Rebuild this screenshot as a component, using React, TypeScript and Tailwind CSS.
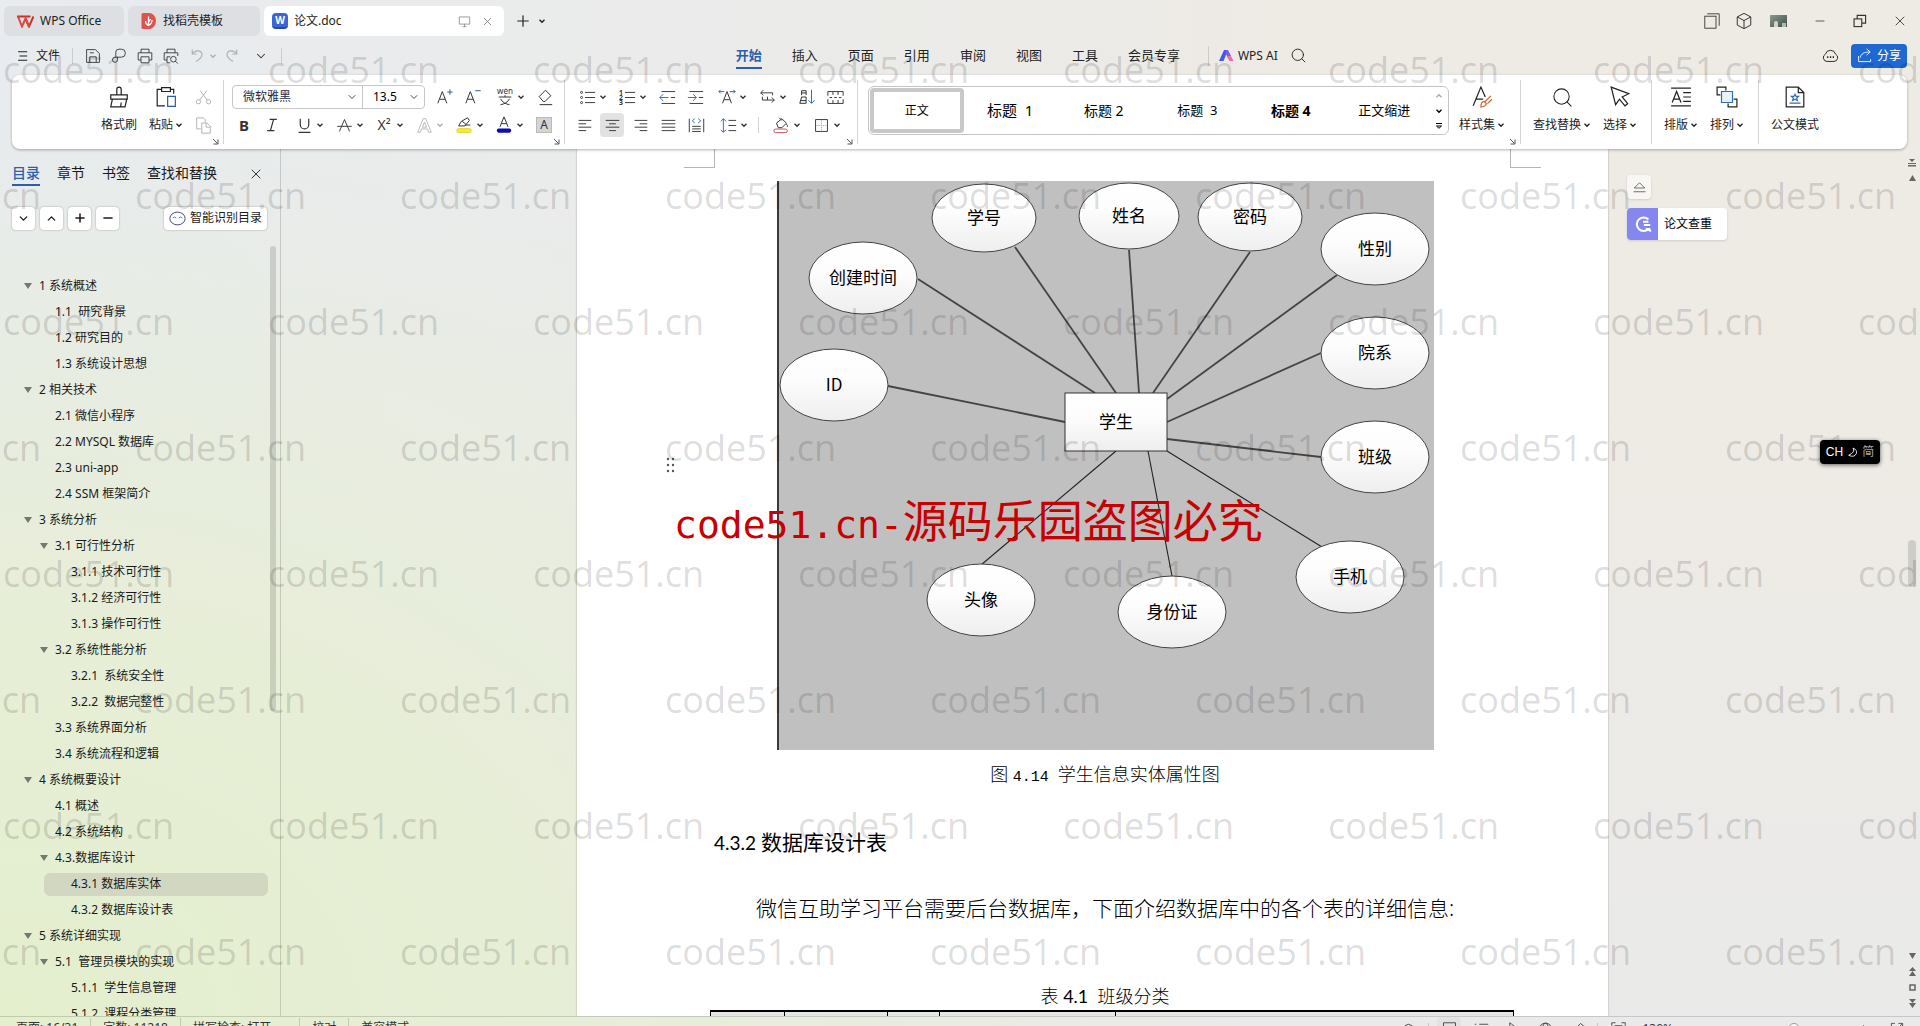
import { useState } from "react";
import type { ReactNode } from "react";
import { ChevronDown, ChevronUp, Minus, Plus, Search, X } from "lucide-react";

type IconProps = { children: ReactNode; size?: number; className?: string };

function Icon({ children, size = 20, className = "" }: IconProps) {
  return (
    <svg
      width={size}
      height={size}
      viewBox="0 0 20 20"
      fill="none"
      stroke="currentColor"
      strokeWidth={1.1}
      className={`shrink-0 ${className}`}
      aria-hidden="true"
    >
      {children}
    </svg>
  );
}

function Caret({ className = "" }: { className?: string }) {
  return (
    <svg width="8" height="8" viewBox="0 0 8 8" fill="none" stroke="currentColor" strokeWidth="1.4" className={`shrink-0 ${className}`} aria-hidden="true">
      <path d="M1.5 2.8 4 5.2 6.5 2.8" />
    </svg>
  );
}

type ToolProps = { label: string; children: ReactNode; drop?: boolean; muted?: boolean; active?: boolean };

function Tool({ label, children, drop, muted, active }: ToolProps) {
  return (
    <button
      aria-label={label}
      className={`flex h-6 shrink-0 items-center rounded ${muted ? "text-[#b0b0b0]" : "text-[#333]"} ${active ? "bg-[#e2e2e2]" : ""}`}
    >
      <span className="flex w-6 items-center justify-center">{children}</span>
      {drop && <Caret />}
    </button>
  );
}

function BigTool({ label, children, drop }: { label: string; children: ReactNode; drop?: boolean }) {
  return (
    <button className="flex shrink-0 flex-col items-center text-xs text-[#222]">
      <span className="flex h-7 items-center">{children}</span>
      <span className="flex h-6 items-center gap-0.5 pt-1 whitespace-nowrap">
        {label}
        {drop && <Caret />}
      </span>
    </button>
  );
}

function Launcher() {
  return (
    <svg width="7" height="7" viewBox="0 0 7 7" fill="none" stroke="#555" className="absolute right-1 bottom-1" aria-hidden="true">
      <path d="M1 1 5.5 5.5M6 1.5V6H1.5" />
    </svg>
  );
}

const Divider = () => <div className="h-16 w-px shrink-0 self-center bg-[#d4d4d4]" />;

const lines = (rows: [number, number][]) => rows.map(([a, b], i) => <path key={i} d={`M${a} ${4 + i * 4}H${b}`} />);

/* ---------- title bar ---------- */

function TitleBar() {
  return (
    <header className="flex h-9 shrink-0 items-end text-xs text-[#222]">
      <div className="ml-1 flex h-[30px] items-end gap-1" role="tablist">
        <button role="tab" aria-selected="false" className="flex h-[30px] w-[120px] items-center gap-1.5 rounded-md bg-[#dddfe2] pl-[13px]">
          <svg width="17" height="13" viewBox="0 0 17 13" fill="none" aria-hidden="true">
            <path d="M0 1.500h13.500M16.500 1.500 12 11.500 8.500 3.500" stroke="#c8312b" strokeWidth="2" />
            <path d="M1 1.500 5 11.500 8.500 3.500 12 11.500" stroke="#e0483e" strokeWidth="2" />
          </svg>
          WPS Office
        </button>
        <button role="tab" aria-selected="false" className="flex h-[30px] w-[132px] items-center gap-1.5 rounded-md bg-[#dddfe2] pl-[13px]">
          <svg width="16" height="16" viewBox="0 0 16 16" aria-hidden="true">
            <path d="M2 0h6a7 8 0 0 1 0 16H2a1.5 1.5 0 0 1-1.5-1.5v-13A1.5 1.5 0 0 1 2 0Z" fill="#e0524e" />
            <path d="M7.5 3.5v9M4.5 8c0 3 3 4.500 3 4.500s3.500-1.500 3.500-5.500M7.500 9.500 9.500 6" stroke="#fff" strokeWidth="1.300" fill="none" />
          </svg>
          找稻壳模板
        </button>
        <button role="tab" aria-selected="true" className="flex h-[30px] w-[240px] items-center gap-1.5 rounded-md bg-white pr-2.5 pl-2">
          <span className="flex size-4 items-center justify-center rounded-sm border-b-2 border-[#2746a8] bg-[#3c66d8] text-[10px] leading-none font-bold text-white">
            W
          </span>
          <span className="flex-1 text-left">论文.doc</span>
          <Icon size={13} className="mr-1 text-[#777]">
            <path d="M2 3h16v11H2zM7 18h6M10 14v4" />
          </Icon>
          <X size={13} strokeWidth={1.5} className="text-[#777]" />
        </button>
      </div>
      <button aria-label="新建" className="ml-2.5 flex h-[30px] items-center">
        <Plus size={18} strokeWidth={1.6} />
      </button>
      <button aria-label="标签列表" className="ml-1.5 flex h-[30px] items-center">
        <Caret />
      </button>
      <div className="ml-auto flex h-[30px] items-center text-[#333]">
        <button aria-label="工作区" className="w-8"><Icon size={16} className="mx-auto"><rect x="1" y="4" width="14" height="15" /><path d="M4 1h15v15" /></Icon></button>
        <button aria-label="应用" className="w-8"><Icon size={18} className="mx-auto"><path d="M10 1.500 17.500 5.500v9L10 18.500l-7.500-4v-9ZM2.500 5.500 10 9.500l7.500-4M10 9.500v9" /></Icon></button>
        <button aria-label="账户" className="w-9">
          <span className="mx-auto flex h-3 w-[17px] items-end bg-linear-to-br from-[#8a9c92] to-[#3f4f46]"><span className="ml-1 h-1.5 w-1 rounded-t-full bg-[#d8d0c4]" /><span className="ml-1 h-1 w-1 bg-[#a9bcae]" /></span>
        </button>
        <button aria-label="最小化" className="ml-1 w-10"><Minus size={14} strokeWidth={1.3} className="mx-auto" /></button>
        <button aria-label="还原" className="w-10"><Icon size={14} className="mx-auto"><rect x="1.500" y="7" width="11" height="11" strokeWidth="1.600" /><path d="M6 7V2h12v11h-5" strokeWidth="1.600" /></Icon></button>
        <button aria-label="关闭" className="w-10"><X size={16} strokeWidth={1.3} className="mx-auto" /></button>
      </div>
    </header>
  );
}

/* ---------- menu row ---------- */

const menus = ["开始", "插入", "页面", "引用", "审阅", "视图", "工具", "会员专享"];

function MenuBar() {
  const [menu, setMenu] = useState("开始");
  return (
    <div className="grid h-[39px] shrink-0 grid-cols-[6fr_auto_5fr] items-center text-[#222]">
      <div className="flex items-center pl-4">
        <button className="flex items-center gap-1.5 text-xs">
          <Icon size={14}><path d="M3 4h13M5 10h11M3 16h13" strokeWidth="1.500" /></Icon>
          文件
        </button>
        <div className="mr-2 ml-3 h-4 w-px bg-[#ccc]" />
        <div className="flex gap-0.5">
          <Tool label="保存"><Icon size={16}><path d="M2 2h11l5 5v11H2ZM6 18v-7h8v7M6 6h5" /></Icon></Tool>
          <Tool label="输出为PDF"><Icon size={16}><path d="M6 12V5q0-3.500 4-3.500h3a5 5 0 0 1 0 10H5a3.200 3.200 0 1 0 3.200 3.200V11" /></Icon></Tool>
          <Tool label="打印"><Icon size={16}><path d="M5 6V1.500h10V6M5 15H1.500V6h17v9H15M5 11h10v7.500H5z" /></Icon></Tool>
          <Tool label="打印预览"><Icon size={16}><path d="M5 6V1.500h10V6M5 15H1.500V6h17v4M5 11h4M5 11v7.500h4" /><circle cx="13" cy="14" r="3.500" /><path d="m15.500 16.500 3 3" /></Icon></Tool>
          <Tool label="撤销" drop muted><Icon size={15}><path d="M3 2v6h6M3 8c3-5 12-6 13 0 .5 4-3 7-8 10" strokeWidth="1.500" /></Icon></Tool>
          <Tool label="恢复" muted><Icon size={15}><path d="M17 2v6h-6M17 8C14 3 5 2 4 8c-.5 4 3 7 8 10" strokeWidth="1.500" /></Icon></Tool>
          <span className="ml-1"><Tool label="更多"><ChevronDown size={14} strokeWidth={1.8} /></Tool></span>
        </div>
        <div className="ml-2 h-4 w-px bg-[#ccc]" />
      </div>
      <div className="flex items-center">
        <nav className="flex gap-[30px] pt-1 text-[13px]">
          {menus.map((m) => (
            <button
              key={m}
              onClick={() => setMenu(m)}
              className={`border-b-2 pb-px whitespace-nowrap ${m === menu ? "border-[#2b5fab] font-bold text-[#2b5fab]" : "border-transparent"}`}
            >
              {m}
            </button>
          ))}
        </nav>
        <div className="ml-7 h-5 w-px bg-[#ccc]" />
        <button className="ml-2.5 flex items-center gap-1 text-xs">
          <svg width="15" height="13" viewBox="0 0 15 13" aria-hidden="true">
            <path d="M0 12 5 1h4L4.500 12Z" fill="#3f5be8" />
            <path d="M7.500 1H9l3 6-3.500 1L6.500 4Z" fill="#7c5be6" />
            <path d="m8 8 4-1 2.500 5h-4Z" fill="#f06aa8" />
          </svg>
          WPS AI
        </button>
        <button aria-label="搜索" className="ml-3"><Search size={17} strokeWidth={1.3} /></button>
      </div>
      <div className="flex items-center justify-end gap-3 pr-[13px]">
        <button aria-label="云同步">
          <Icon size={17}><path d="M6 17a4.500 4.500 0 0 1-2-8.500 6.200 6.200 0 0 1 12 0A4.500 4.500 0 0 1 14 17Z" /><path d="M6 12h1.500M9.300 12h1.500M12.600 12h1.500" strokeWidth="2" /></Icon>
        </button>
        <button className="flex h-6 w-14 items-center justify-center gap-1 rounded bg-[#1e68d2] text-xs text-white">
          <Icon size={16}><path d="M2 10v7h15v-3M4 12c1-5 5-7 12-7M12 1l4.500 4-4.500 4" /></Icon>
          分享
        </button>
      </div>
    </div>
  );
}

/* ---------- ribbon ---------- */

const styles = [
  { name: "正文", cls: "text-xs" },
  { name: "标题  1", cls: "text-[15px]" },
  { name: "标题 2", cls: "text-[14px]" },
  { name: "标题  3", cls: "text-[13px]" },
  { name: "标题 4", cls: "text-[14px] font-bold" },
  { name: "正文缩进", cls: "text-[13px]" },
];

function FontGroup() {
  return (
    <div className="relative flex w-[340px] shrink-0 flex-col gap-1 pt-2.5 pl-2">
      <div className="flex gap-2">
        <div className="flex h-6 w-[193px] items-center rounded border border-[#c6c6c6] text-xs">
          <label className="flex h-full flex-1 items-center">
            <input aria-label="字体" defaultValue="微软雅黑" className="w-full min-w-0 pl-2.5 text-xs text-[#1c2c4a] outline-none" />
            <ChevronDown size={12} strokeWidth={1.4} className="mr-1 shrink-0" />
          </label>
          <label className="flex h-full w-[62px] items-center border-l border-[#c6c6c6]">
            <input aria-label="字号" defaultValue="13.5" className="w-full min-w-0 pl-2.5 text-xs outline-none" />
            <ChevronDown size={12} strokeWidth={1.4} className="mr-1 shrink-0" />
          </label>
        </div>
        <div className="flex gap-1">
          <Tool label="增大字号"><Icon size={18}><path d="M2 17 7 4l5 13M4 12.500h6" /><path d="M12.500 4.500h6M15.500 1.500v6" stroke="#2f5e9e" /></Icon></Tool>
          <Tool label="减小字号"><Icon size={18}><path d="M2 17 7 4l5 13M4 12.500h6" /><path d="M12.500 3h6" stroke="#2f5e9e" /></Icon></Tool>
        </div>
        <Tool label="拼音指南" drop>
          <Icon size={18}><text x="10" y="7" textAnchor="middle" fontSize="9" fill="currentColor" stroke="none">wén</text><path d="M3 10h14M10 8v2M5 12c2 4 6 6 10 6.500M15 12c-2 4-6 6-10 6.500" /></Icon>
        </Tool>
        <Tool label="清除格式"><Icon size={18}><path d="m3.500 9.500 7-7 6 6-6.500 6.500H8ZM4 18.500h14" /></Icon></Tool>
      </div>
      <div className="flex gap-2">
        <div className="flex gap-1">
          <Tool label="加粗"><b className="text-[15px]">B</b></Tool>
          <Tool label="倾斜"><Icon size={16}><path d="M7 3h9M4 17h9M12 3 8 17" strokeWidth="1.500" /></Icon></Tool>
        </div>
        <Tool label="下划线" drop><Icon size={17}><path d="M5 2v7a5 5 0 0 0 10 0V2M3 18h14" strokeWidth="1.400" /></Icon></Tool>
        <Tool label="删除线" drop><Icon size={17}><path d="M10 3 4 17M10 3l6 14M1.500 11h17" /></Icon></Tool>
        <Tool label="上标" drop><span className="text-sm">X²</span></Tool>
        <Tool label="文字效果" drop muted><Icon size={17}><path d="M8.500 2h3L18 18h-3l-1.500-4h-7L5 18H2ZM10 6l-2.500 6h5Z" strokeWidth="1" /></Icon></Tool>
        <Tool label="突出显示" drop><Icon size={18}><path d="m4 11 3-5 7-4 2 3-5 6H4ZM8 6l4 3M11 10h6" /><rect x="2" y="14" width="16" height="4.500" rx="2" fill="#f7ef1c" stroke="#c7bd22" strokeWidth=".6" /></Icon></Tool>
        <Tool label="字体颜色" drop><Icon size={18}><path d="M5.500 12 10 1l4.500 11M7 8.500h6" /><rect x="2" y="14" width="16" height="4.500" rx="2" fill="#0b0bb8" stroke="none" /></Icon></Tool>
        <Tool label="字符底纹"><span className="flex size-4 items-center justify-center border border-[#bbb] bg-[#d4d4d4] text-xs">A</span></Tool>
      </div>
      <Launcher />
    </div>
  );
}

function ParagraphGroup() {
  return (
    <div className="relative flex w-[292px] shrink-0 flex-col gap-1 pt-2.5 pl-[7px]">
      <div className="flex gap-2 pl-[3px]">
        <Tool label="项目符号" drop><Icon size={17}>{[4, 10, 16].map((y) => <g key={y}><circle cx="3" cy={y} r="1.200" /><path d={`M7 ${y}h12`} /></g>)}</Icon></Tool>
        <Tool label="编号" drop><Icon size={17}>{[4, 10, 16].map((y, i) => <g key={y}><text x="0" y={y + 3} fontSize="8" fontWeight="700" fill="currentColor" stroke="none">{i + 1}</text><path d={`M7 ${y}h12`} /></g>)}</Icon></Tool>
        <div className="flex gap-1">
          <Tool label="减少缩进"><Icon size={17}><path d="M3 3h16M3 17h16M14 10h5" /><path d="M1 10h10M5 6l-4 4 4 4" stroke="#2f6db5" /></Icon></Tool>
          <Tool label="增加缩进"><Icon size={17}><path d="M3 3h16M3 17h16M14 10h5" /><path d="M1 10h10M7 6l4 4-4 4" stroke="#2f6db5" /></Icon></Tool>
        </div>
        <Tool label="中文版式" drop><Icon size={18}><path d="M5 17 10 4l5 13M7 13h6" /><path d="M1 4h6M3 2 1 4l2 2M19 4h-6M17 2l2 2-2 2" stroke="#2f6db5" /></Icon></Tool>
        <Tool label="文字方向" drop><Icon size={17}><path d="M5 1.500 2 4.500l3 3M2 4.500h14v3M4 9v4h14M15 10l3 3-3 3M10 9v4" /></Icon></Tool>
        <div className="flex gap-1">
          <Tool label="排序"><Icon size={18}><path d="M4 8V3h5v5M4 5.500h5M2 17l2-7h5v7H2M3 14h6" /><path d="M15 2v15M11.500 13.500 15 17l3.500-3.500" stroke="#2f6db5" /></Icon></Tool>
          <Tool label="制表位"><Icon size={17}><path d="M1 8V3h18v5M1 12v5h18v-5M7 3v4M13 3v4M7 17v-4M13 17v-4M3 10h3M8.500 10h3M14 10h3" /></Icon></Tool>
        </div>
      </div>
      <div className="flex gap-1">
        <Tool label="左对齐"><Icon size={17}>{lines([[3, 18], [3, 12], [3, 18], [3, 12]])}</Icon></Tool>
        <Tool label="居中" active><Icon size={17}>{lines([[2, 18], [6, 14], [2, 18], [6, 14]])}</Icon></Tool>
        <Tool label="右对齐"><Icon size={17}>{lines([[3, 18], [9, 18], [3, 18], [9, 18]])}</Icon></Tool>
        <Tool label="两端对齐"><Icon size={17}>{lines([[2, 18], [2, 18], [2, 18], [2, 18]])}</Icon></Tool>
        <Tool label="分散对齐"><Icon size={17}><path d="M1.500 2v16M18.500 2v16M5 11h10M5 14h10M5 17h10" /><path d="M8 2 5 4.500 8 7M12 2l3 2.500L12 7" stroke="#2f6db5" /></Icon></Tool>
        <span className="ml-1"><Tool label="行距" drop><Icon size={17}><path d="M10 4h9M10 10h9M10 16h9" /><path d="M4 2v16M1 5l3-3 3 3M1 15l3 3 3-3" stroke="#2f6db5" /></Icon></Tool></span>
        <div className="mx-1.5 h-4 w-px self-center bg-[#d4d4d4]" />
        <Tool label="底纹颜色" drop><Icon size={18}><path d="m5 8 6-5 5 5-5 5H7ZM8 2l3 3M16 9q2 2 1 3" /><rect x="2" y="14.500" width="15" height="4" rx="2" stroke="#c4525c" /></Icon></Tool>
        <span className="ml-1"><Tool label="边框" drop><Icon size={17}><path d="M3 3h14v14H3z" /><path d="M10 4v12M4 10h12" stroke="#aaa" strokeDasharray="1.500 1" /></Icon></Tool></span>
      </div>
      <Launcher />
    </div>
  );
}

function Ribbon() {
  return (
    <section className="relative z-10 mr-[13px] ml-3 flex h-[74px] shrink-0 overflow-hidden rounded-lg bg-white shadow-[0_1px_3px_rgba(0,0,0,0.3)]">
      <div className="relative flex w-[211px] shrink-0 gap-3 pt-2 pl-[89px]">
        <BigTool label="格式刷"><Icon size={22}><path d="M8 8V3a2 2 0 0 1 4 0v5M2.500 8h15v4h-15ZM4 12l-1.500 7h13l1.500-7M12 15l-.5 4" /></Icon></BigTool>
        <BigTool label="粘贴" drop><Icon size={22}><path d="M6 3H2v15h7M14 3h3v4M6 1.500h8V5H6Z" /><path d="M11.500 9.500h7v9h-7z" stroke="#2f5e9e" /></Icon></BigTool>
        <div className="-ml-1 flex flex-col gap-1 pt-0.5">
          <Tool label="剪切" muted><Icon size={17}><circle cx="4" cy="15" r="2.500" /><circle cx="16" cy="15" r="2.500" /><path d="M5.500 13 14 2M14.500 13 6 2" /></Icon></Tool>
          <Tool label="复制" muted><Icon size={17}><path d="M7 14H2V1h8l2 2v3M8 7h6l4 4v8H8ZM13 7v5h5" /></Icon></Tool>
        </div>
        <Launcher />
      </div>
      <Divider />
      <FontGroup />
      <Divider />
      <ParagraphGroup />
      <Divider />
      <div className="mt-[11px] ml-2.5 flex h-[49px] w-[581px] shrink-0 rounded-md border border-[#c4c4c4] p-px">
        {styles.map((s, i) => (
          <button
            key={s.name}
            className={`flex-1 rounded border-4 whitespace-pre text-black ${s.cls} ${i === 0 ? "border-[#c8c8c8]" : "border-transparent"}`}
          >
            {s.name}
          </button>
        ))}
        <div className="flex w-4 flex-col items-center justify-around">
          <button aria-label="上一行" className="text-[#aaa]"><Caret className="rotate-180" /></button>
          <button aria-label="下一行"><Caret /></button>
          <button aria-label="展开样式">
            <svg width="8" height="8" viewBox="0 0 8 8" fill="none" stroke="currentColor" aria-hidden="true"><path d="M1 1.500h6M1.500 4 4 6.300 6.500 4Z" /></svg>
          </button>
        </div>
      </div>
      <div className="relative w-[71px] shrink-0 pt-2 pl-2.5">
        <BigTool label="样式集" drop><Icon size={22}><path d="M2 18 9 1l4 9M4.500 12H11" /><path d="m18 9-6 6M19 12l-4 4M12 14q-3 0-3 5 4 0 5-3Z" stroke="#d1632b" /></Icon></BigTool>
        <Launcher />
      </div>
      <Divider />
      <div className="flex w-[130px] shrink-0 gap-3 pt-2 pl-3">
        <BigTool label="查找替换" drop><Search size={23} strokeWidth={1.1} /></BigTool>
        <BigTool label="选择" drop><Icon size={22}><path d="m2 1 16 6-6 3 5 6-2.500 2-5-6L6 17Z" /></Icon></BigTool>
      </div>
      <Divider />
      <div className="flex w-[106px] shrink-0 gap-3 pt-2 pl-3">
        <BigTool label="排版" drop><Icon size={22}><path d="M1 2h18M1 18h18M12 6h7M12 10h7M12 14h7M2 15 6 5l4 10M3.500 12h5" /></Icon></BigTool>
        <BigTool label="排列" drop><Icon size={22}><path d="M4 8H1V1h8v3M16 12h3v7h-8v-3" /><path d="M5 5h10v10H5z" stroke="#2f6db5" fill="#eaf3fd" /></Icon></BigTool>
      </div>
      <Divider />
      <div className="pt-2 pl-3">
        <BigTool label="公文模式"><Icon size={22}><path d="M2 1h11l5 5v13H2ZM13 1v5h5" /><path d="m10 7.500 1 2h2.200l-1.700 1.500.7 2.200-2.200-1.200-2.200 1.200.7-2.200L6.800 9.500H9ZM5 15.500h10" stroke="#2f6db5" /></Icon></BigTool>
      </div>
    </section>
  );
}

/* ---------- outline ---------- */

type Row = { level: 1 | 2 | 3; text: string; open?: boolean };

const outline: Row[] = [
  { level: 1, text: "1 系统概述", open: true },
  { level: 2, text: "1.1  研究背景" },
  { level: 2, text: "1.2 研究目的" },
  { level: 2, text: "1.3 系统设计思想" },
  { level: 1, text: "2 相关技术", open: true },
  { level: 2, text: "2.1 微信小程序" },
  { level: 2, text: "2.2 MYSQL 数据库" },
  { level: 2, text: "2.3 uni-app" },
  { level: 2, text: "2.4 SSM 框架简介" },
  { level: 1, text: "3 系统分析", open: true },
  { level: 2, text: "3.1 可行性分析", open: true },
  { level: 3, text: "3.1.1 技术可行性" },
  { level: 3, text: "3.1.2 经济可行性" },
  { level: 3, text: "3.1.3 操作可行性" },
  { level: 2, text: "3.2 系统性能分析", open: true },
  { level: 3, text: "3.2.1  系统安全性" },
  { level: 3, text: "3.2.2  数据完整性" },
  { level: 2, text: "3.3 系统界面分析" },
  { level: 2, text: "3.4 系统流程和逻辑" },
  { level: 1, text: "4 系统概要设计", open: true },
  { level: 2, text: "4.1 概述" },
  { level: 2, text: "4.2 系统结构" },
  { level: 2, text: "4.3.数据库设计", open: true },
  { level: 3, text: "4.3.1 数据库实体" },
  { level: 3, text: "4.3.2 数据库设计表" },
  { level: 1, text: "5 系统详细实现", open: true },
  { level: 2, text: "5.1  管理员模块的实现", open: true },
  { level: 3, text: "5.1.1  学生信息管理" },
  { level: 3, text: "5.1.2  课程分类管理" },
];

const indent = { 1: "ml-6", 2: "ml-10", 3: "ml-11 pl-3" };

function Outline() {
  const [selected, setSelected] = useState("4.3.1 数据库实体");
  return (
    <aside className="flex w-[281px] shrink-0 flex-col border-r border-black/15 text-[#1a1a1a]">
      <div className="flex h-[37px] shrink-0 items-end gap-[17px] pl-3 text-sm">
        <button className="border-b-2 border-[#2b5fab] pb-px font-medium text-[#2b5fab]">目录</button>
        <button className="pb-[3px]">章节</button>
        <button className="pb-[3px]">书签</button>
        <button className="pb-[3px]">查找和替换</button>
        <button aria-label="关闭" className="mr-4 ml-auto pb-1"><X size={16} strokeWidth={1.3} /></button>
      </div>
      <div className="mt-5 flex h-6 shrink-0 items-center gap-[5px] pr-[13px] pl-3">
        {[
          { label: "展开", icon: <ChevronDown size={13} strokeWidth={2.4} /> },
          { label: "收起", icon: <ChevronUp size={13} strokeWidth={2.4} /> },
          { label: "增加", icon: <Plus size={14} strokeWidth={2.6} /> },
          { label: "减少", icon: <Minus size={14} strokeWidth={2.4} /> },
        ].map((b) => (
          <button key={b.label} aria-label={b.label} className="flex size-[23px] items-center justify-center rounded bg-white shadow-[0_0_2px_rgba(0,0,0,0.35)]">
            {b.icon}
          </button>
        ))}
        <button className="ml-auto flex h-[23px] w-[103px] items-center justify-center gap-1 rounded bg-white text-xs shadow-[0_0_2px_rgba(0,0,0,0.35)]">
          <Icon size={17} className="text-[#3c4464]"><ellipse cx="10" cy="10" rx="9" ry="7.500" /><path d="M4.500 9.500q2-2.500 4 0M11.500 9.500q2-2.500 4 0" stroke="#3c6fd8" /></Icon>
          智能识别目录
        </button>
      </div>
      <div className="mt-4 flex min-h-0 flex-1 justify-between overflow-hidden">
        <ul className="w-[268px] shrink-0 pt-[27px] text-xs">
          {outline.map((r) => (
            <li key={r.text} className="flex h-[26px] items-center">
              <button
                onClick={() => setSelected(r.text)}
                className={`flex h-[23px] flex-1 items-center gap-[7px] rounded-md whitespace-pre ${indent[r.level]} ${r.text === selected ? "bg-[#d1d7c1]" : ""}`}
              >
                <svg width="8" height="8" viewBox="0 0 8 8" fill="#76786f" aria-hidden="true">{r.open && <path d="M0 1h8L4 7Z" />}</svg>
                {r.text}
              </button>
            </li>
          ))}
        </ul>
        <div className="mr-1 h-[465px] w-1.5 rounded-full bg-black/13" />
      </div>
    </aside>
  );
}

/* ---------- document ---------- */

const attributes = [
  { name: "创建时间", x: 86, y: 97, rx: 54, ry: 36, from: [141, 98], to: [318, 212] },
  { name: "学号", x: 207, y: 37, rx: 52, ry: 34, from: [238, 66], to: [339, 212] },
  { name: "姓名", x: 352, y: 35, rx: 50, ry: 33, from: [352, 69], to: [362, 212] },
  { name: "密码", x: 473, y: 36, rx: 52, ry: 34, from: [473, 71], to: [376, 212] },
  { name: "性别", x: 598, y: 68, rx: 54, ry: 36, from: [560, 94], to: [390, 218] },
  { name: "院系", x: 598, y: 172, rx: 54, ry: 36, from: [544, 172], to: [390, 241] },
  { name: "班级", x: 598, y: 276, rx: 54, ry: 36, from: [544, 276], to: [390, 258] },
  { name: "ID", x: 57, y: 204, rx: 54, ry: 36, from: [111, 205], to: [288, 241] },
  { name: "手机", x: 573, y: 396, rx: 54, ry: 36, from: [545, 366], to: [390, 270], thin: true },
  { name: "身份证", x: 395, y: 431, rx: 54, ry: 36, from: [395, 395], to: [371, 270], thin: true },
  { name: "头像", x: 204, y: 419, rx: 54, ry: 36, from: [204, 384], to: [339, 270], thin: true },
];

function EntityDiagram() {
  return (
    <svg
      viewBox="0 0 657 569"
      className="mx-auto block w-[657px] max-w-full bg-[#c0c0c0]"
      role="img"
      aria-label="学生信息实体属性图"
      fontSize="17"
      textAnchor="middle"
      fontFamily="'Noto Sans CJK SC', sans-serif"
    >
      <defs>
        <linearGradient id="shape" x2="0" y2="1">
          <stop offset="0" stopColor="#fff" />
          <stop offset=".4" stopColor="#fdfdfd" />
          <stop offset="1" stopColor="#eee" />
        </linearGradient>
      </defs>
      <path d="M1 0v569" stroke="#3a3a3a" strokeWidth="2" />
      {attributes.map((a) => (
        <path
          key={a.name}
          d={`M${a.from[0]} ${a.from[1]}L${a.to[0]} ${a.to[1]}`}
          stroke={a.thin ? "#222" : "#444"}
          strokeWidth={a.thin ? 1.1 : 1.8}
        />
      ))}
      {attributes.map((a) => (
        <g key={a.name}>
          <ellipse cx={a.x} cy={a.y} rx={a.rx} ry={a.ry} fill="url(#shape)" stroke="#444" />
          <text x={a.x} y={a.y + 6}>{a.name}</text>
        </g>
      ))}
      <rect x="288" y="212" width="102" height="58" fill="url(#shape)" stroke="#333" />
      <text x="339" y="247">学生</text>
    </svg>
  );
}

function Page() {
  return (
    <article className="relative w-[1031px] shrink-0 bg-white pt-8 pr-[112px] pl-[137px] text-black shadow-[0_0_2px_rgba(0,0,0,0.3)]">
      <div className="absolute top-0 left-[107px] h-[19px] w-[31px] border-r border-b border-[#b5b5b5]" />
      <div className="absolute top-0 right-[67px] h-[19px] w-[31px] border-b border-l border-[#b5b5b5]" />
      <svg width="10" height="16" viewBox="0 0 10 16" fill="#555" className="absolute top-[308px] left-[89px]" aria-hidden="true">
        {[2, 8, 14].map((y) => <g key={y}><circle cx="2" cy={y} r="1.200" /><circle cx="7" cy={y} r="1.200" /></g>)}
      </svg>
      <EntityDiagram />
      <p className="mt-2.5 text-center text-[18px] leading-7 font-light whitespace-pre">
        图 <span className="font-['Liberation_Mono'] text-[15px]">4.14 </span>学生信息实体属性图
      </p>
      <h3 className="mt-[34px] text-[21px] leading-8 whitespace-pre">
        <span className="font-[Lato] text-[19px]">4.3.2 </span>数据库设计表
      </h3>
      <p className="mt-[31px] -mr-16 pl-[42px] text-[21px] leading-9 font-light">
        微信互助学习平台需要后台数据库，下面介绍数据库中的各个表的详细信息:
      </p>
      <p className="mt-14 text-center text-[18px] leading-7 font-light whitespace-pre">
        表 <span className="font-[Lato] font-normal">4.1  </span>班级分类
      </p>
      <table className="-ml-1 w-[804px] table-fixed border-collapse">
        <thead>
          <tr className="h-8 bg-[#e5e5e5]">
            <th className="w-[74px] border border-t-2 border-black" />
            <th className="w-[103px] border border-t-2 border-black" />
            <th className="w-[52px] border border-t-2 border-black" />
            <th className="w-[176px] border border-t-2 border-black" />
            <th className="border border-t-2 border-black" />
          </tr>
        </thead>
      </table>
    </article>
  );
}

function PageScrollbar() {
  return (
    <div className="flex w-4 shrink-0 flex-col items-center pt-2.5 pb-2 text-[#666]">
      <svg width="8" height="8" viewBox="0 0 8 8" fill="currentColor" aria-hidden="true"><path d="M1 0h6L4 3ZM0 4h8v1H0ZM0 6h8v1.500H0Z" /></svg>
      <svg width="7" height="6" viewBox="0 0 7 6" fill="currentColor" className="mt-2" aria-hidden="true"><path d="M3.500 0 7 6H0Z" /></svg>
      <div className="mt-[359px] h-[47px] w-2 rounded-full bg-[#cfcdc8]" />
      <div className="mt-auto flex flex-col items-center gap-2">
        <svg width="7" height="6" viewBox="0 0 7 6" fill="currentColor" aria-hidden="true"><path d="M0 0h7L3.500 6Z" /></svg>
        <svg width="7" height="9" viewBox="0 0 7 9" fill="currentColor" aria-hidden="true"><path d="M3.500 0 7 4H0ZM3.500 4 7 9H0Z" /></svg>
        <svg width="7" height="7" viewBox="0 0 7 7" fill="none" stroke="currentColor" strokeWidth="1.500" aria-hidden="true"><path d="M1 1h5v5H1z" /></svg>
        <svg width="7" height="9" viewBox="0 0 7 9" fill="currentColor" aria-hidden="true"><path d="M0 0h7L3.500 4ZM0 4h7L3.500 9Z" /></svg>
      </div>
    </div>
  );
}

function DocumentArea() {
  return (
    <main className="relative flex min-w-0 flex-1 overflow-hidden">
      <div className="flex flex-1 justify-center overflow-hidden">
        <Page />
      </div>
      <PageScrollbar />
      <div className="absolute top-[26px] right-[193px] flex w-[100px] flex-col items-start gap-[9px]">
        <button aria-label="收起" className="flex size-6 items-center justify-center rounded-sm bg-white/60 pb-0.5 shadow-sm">
          <Icon size={15} className="text-[#555]"><path d="M3 12 10 5l7 7ZM2 17h16" /></Icon>
        </button>
        <button className="flex h-8 w-full items-center overflow-hidden rounded-sm bg-white text-xs shadow">
          <span className="flex h-full w-[31px] items-center justify-center bg-[#8687ee] text-white">
            <Icon size={18}><path d="M16 5a7.500 7.500 0 1 0 0 10.500M10 7.500h6M11 11h7M13 15.500h4l1.500 3" strokeWidth="2.200" /></Icon>
          </span>
          <span className="ml-1.5">论文查重</span>
        </button>
      </div>
      <div className="absolute top-[291px] right-10 flex h-6 w-[60px] items-center justify-center gap-1 rounded bg-black font-['Liberation_Sans','Noto_Sans_CJK_SC',sans-serif] text-xs text-white shadow-[0_1px_4px_rgba(0,0,0,0.6)]">
        CH
        <Icon size={11}><path d="M11 2q5 7-8 13 10 5 14-3 2-7-6-10Z" strokeWidth="1.600" /></Icon>
        <span className="text-[#aaa]">简</span>
      </div>
    </main>
  );
}

/* ---------- status bar ---------- */

function StatusBar() {
  const sep = <div className="mx-3 h-3 w-px bg-black/15" />;
  return (
    <footer className="-mb-3.5 flex h-6 shrink-0 items-start border-t border-black/15 px-4 pt-px text-xs leading-5 text-[#333]">
      <span>页面: 16/31</span>
      {sep}
      <span>字数: 11218</span>
      {sep}
      <span>拼写检查: 打开</span>
      <div className="mr-3 ml-7 h-3 w-px bg-black/15" />
      <span>校对</span>
      {sep}
      <span>兼容模式</span>
      <div className="-mt-px ml-auto flex items-center">
        <Tool label="护眼模式"><Icon size={15}><path d="M1 10q9-14 18 0-9 12-18 0Z" /><circle cx="10" cy="9" r="3" /></Icon></Tool>
        <div className="mx-2 h-3 w-px bg-black/15" />
        <div className="flex gap-2">
          <Tool label="页面视图" active><Icon size={15}><path d="M2 1h16v18H2zM6 6h8M6 10h8" /></Icon></Tool>
          <Tool label="大纲"><Icon size={15}><path d="M1 3h2M7 3h12M4 10h2M9 10h10M1 17h2M7 17h12" /></Icon></Tool>
          <Tool label="阅读版式"><Icon size={15}><path d="m5 1 12 9-12 9Z" /></Icon></Tool>
          <Tool label="Web版式"><Icon size={15}><circle cx="10" cy="10" r="8.500" /><ellipse cx="10" cy="10" rx="4" ry="8.500" /><path d="M1.500 10h17" /></Icon></Tool>
          <Tool label="写作模式"><Icon size={15}><path d="m4 12 10-10 4 3L8 16l-6 2Z" /></Icon></Tool>
        </div>
        <div className="mx-2 h-3 w-px bg-black/15" />
        <Tool label="最佳显示比例"><Icon size={15}><path d="M1 5V1h5M14 1h5v4M5 5h10v10H5zM1 15v4h5M14 19h5v-4" /></Icon></Tool>
        <span className="ml-3">130%</span>
        <button aria-label="缩小" className="ml-4"><Minus size={12} /></button>
        <label className="mx-2 flex items-center">
          <input type="range" aria-label="显示比例" defaultValue={62} className="h-3 w-[140px] appearance-none rounded-full bg-transparent [&::-webkit-slider-thumb]:size-3 [&::-webkit-slider-thumb]:appearance-none [&::-webkit-slider-thumb]:rounded-full [&::-webkit-slider-thumb]:border [&::-webkit-slider-thumb]:border-[#999] [&::-webkit-slider-thumb]:bg-white" />
        </label>
        <button aria-label="放大"><Plus size={13} /></button>
        <button aria-label="全屏" className="ml-5"><Icon size={14}><path d="M2 7V2h5M12 2h6v6M18 2l-6 6M2 13v5h5" /></Icon></button>
      </div>
    </footer>
  );
}

/* ---------- watermark ---------- */

function Watermark() {
  return (
    <div className="pointer-events-none absolute inset-0 z-20 overflow-hidden pt-[7px]" aria-hidden="true">
      {Array.from({ length: 8 }, (_, row) => (
        <div key={row} className={`flex h-[126px] items-center ${row % 2 ? "-ml-[130px]" : "ml-[3px]"}`}>
          {Array.from({ length: 9 }, (_, col) => (
            <span key={col} className="w-[265px] shrink-0 font-['Open_Sans'] text-[36px] leading-none text-black/14">
              code51.cn
            </span>
          ))}
        </div>
      ))}
      <p className="absolute top-[489px] left-[674px] font-['DejaVu_Sans_Mono'] text-[38px] leading-[60px] whitespace-nowrap text-[#c80000]">
        code51.cn-<span className="font-['Noto_Sans_CJK_SC'] text-[45px]">源码乐园盗图必究</span>
      </p>
    </div>
  );
}

export default function App() {
  return (
    <div className="relative flex h-screen flex-col overflow-hidden bg-[radial-gradient(ellipse_65%_90%_at_0%_100%,#e3efcd_0%,#e7eed7_45%,#ebecdf00_100%),linear-gradient(to_top,#eaeaea_0%,#eaeaea00_60%),linear-gradient(to_right,#e8ebef_0%,#ebebe9_45%,#eeeae4_70%,#eeebe4_100%)] font-['Noto_Sans','Noto_Sans_CJK_SC',sans-serif]">
      <TitleBar />
      <MenuBar />
      <Ribbon />
      <div className="flex min-h-0 flex-1">
        <Outline />
        <DocumentArea />
      </div>
      <StatusBar />
      <Watermark />
    </div>
  );
}
